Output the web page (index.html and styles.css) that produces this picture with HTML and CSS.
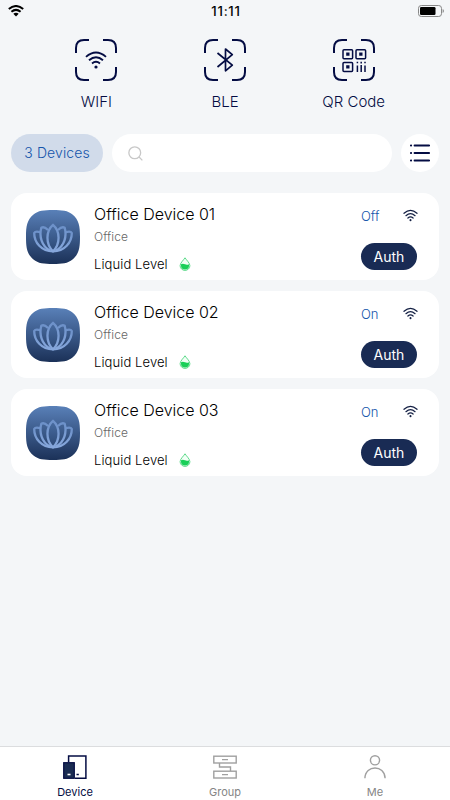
FILE: index.html
```html
<!DOCTYPE html>
<html lang="en">
<head>
    <meta charset="UTF-8">
    <meta name="viewport" content="width=device-width, initial-scale=1.0">
    <title>Devices</title>
    <link rel="stylesheet" href="styles.css">
</head>
<body>
    <!-- shared icons -->
    <svg class="sprite" width="0" height="0">
        <defs>
            <linearGradient id="tileFill" x1="0" y1="0" x2="0" y2="1">
                <stop offset="0" stop-color="#5980b8"/>
                <stop offset="1" stop-color="#1b3158"/>
            </linearGradient>
            <linearGradient id="petal" x1="0" y1="0" x2="0" y2="1">
                <stop offset="0" stop-color="#6d91c9"/>
                <stop offset="1" stop-color="#86a7dc"/>
            </linearGradient>
            <linearGradient id="petalFill" x1="0" y1="0" x2="0" y2="1">
                <stop offset="0" stop-color="#496da2"/>
                <stop offset="1" stop-color="#2c4875"/>
            </linearGradient>
        </defs>
        <symbol id="corners" viewBox="0 0 42 42">
            <path d="M1 14V9Q1 1 9 1H14M28 1H33Q41 1 41 9V14M41 28V33Q41 41 33 41H28M14 41H9Q1 41 1 33V28"/>
        </symbol>
        <symbol id="wifi" viewBox="0 0 16 14">
            <path d="M1 4.600Q8-1.600 15 4.600M3.100 7.200Q8 2.800 12.900 7.200M5.200 9.700Q8 7.200 10.800 9.700" fill="none" stroke="currentColor" stroke-width="1.300" stroke-linecap="round"/>
            <circle cx="8" cy="12" r="1.100" fill="currentColor"/>
        </symbol>
        <symbol id="lotus" viewBox="0 0 54 54">
            <path d="M27 0C36 0 42 .6 46.500 4.500C53 10 54 16 54 27S53 44 46.500 49.500C42 53.400 36 54 27 54S12 53.400 7.500 49.500C1 44 0 38 0 27S1 10 7.500 4.500C12 .6 18 0 27 0Z" fill="url(#tileFill)"/>
            <g fill="none" stroke="url(#petal)" stroke-width="2.300" stroke-linejoin="round">
                <path d="M14.500 22.200C11 21.200 8.800 21.700 8.200 22.900C8.200 32.500 15.500 41.300 27 41.300C38.500 41.300 45.800 32.500 45.800 22.900C45.200 21.700 43 21.200 39.500 22.200"/>
                <path d="M22 20C19.500 17.500 17 16.700 15.300 17.800C13 26 15.500 36 24 40.500"/>
                <path d="M32 20C34.500 17.500 37 16.700 38.700 17.800C41 26 38.500 36 30 40.500"/>
                <path d="M27 14.800C19.600 21 19.600 34.500 27 41.300C34.400 34.500 34.400 21 27 14.800Z" fill="url(#petalFill)"/>
            </g>
        </symbol>
        <symbol id="drop" viewBox="0 0 12 14">
            <path d="M6 .8C4.500 3.200 1.100 6 1.100 8.700A4.900 4.700 0 0 0 10.900 8.700C10.900 6 7.500 3.200 6 .8Z" fill="#f2fff6" stroke="#4bd57d" stroke-width=".9"/>
            <path d="M2 7.200Q4 6.300 6 7.300T10 7.200V8.700A4 3.800 0 0 1 2 8.700Z" fill="#19cf58"/>
        </symbol>
    </svg>

    <div class="app">
        <div class="status-bar">
            <svg class="status-wifi" viewBox="0 0 16 12">
                <path d="M.8 4Q8-2 15.200 4M3.400 6.800Q8 3 12.600 6.800" fill="none" stroke="#000" stroke-width="2"/>
                <path d="M5.300 8.800Q8 6.900 10.700 8.800L8 11.600Z"/>
            </svg>
            <span class="time">11:11</span>
            <svg class="battery" viewBox="0 0 26 12">
                <rect x=".5" y=".5" width="23" height="11" rx="2.800" fill="none" stroke="#888"/>
                <rect x="2" y="2" width="15.500" height="8" rx="1.300"/>
                <path d="M24.700 4V8Q25.800 7.300 25.800 6T24.700 4" fill="#777"/>
            </svg>
        </div>

        <div class="scan-options">
            <div class="scan-option">
                <div class="scan-icon">
                    <svg viewBox="0 0 42 42">
                        <use href="#corners"/>
                        <path d="M11 17.900Q21 9.300 31 17.900M14 21.300Q21 15.300 28 21.300M17 24.500Q21 21.200 25 24.500" stroke-width="1.900"/>
                        <circle cx="21" cy="28" r="1.600" class="solid"/>
                    </svg>
                </div>
                <span>WIFI</span>
            </div>
            <div class="scan-option">
                <div class="scan-icon">
                    <svg viewBox="0 0 42 42">
                        <use href="#corners"/>
                        <path d="M13.500 14L28.300 26.200L21.500 31.800V10L28.300 15.600L13.500 28" stroke-width="1.700"/>
                    </svg>
                </div>
                <span>BLE</span>
            </div>
            <div class="scan-option">
                <div class="scan-icon">
                    <svg viewBox="0 0 42 42">
                        <use href="#corners"/>
                        <g stroke-width="1.500">
                            <rect x="10" y="10.700" width="9.600" height="9" rx="1"/>
                            <rect x="23" y="10.700" width="9.600" height="9" rx="1"/>
                            <rect x="10" y="23.500" width="9.600" height="9" rx="1"/>
                            <path d="M24.400 22.800V24.300M24.400 26.500V33M28.200 22.800V24.500M28.200 26V33M32 22.800V24.300M32 26.500V33"/>
                        </g>
                        <path class="solid" d="M13.200 13.500h3.300v3.300h-3.300zM26.200 13.500h3.300v3.300h-3.300zM13.200 26.300h3.300v3.300h-3.300z"/>
                    </svg>
                </div>
                <span>QR Code</span>
            </div>
        </div>

        <div class="toolbar">
            <div class="device-count">3 Devices</div>
            <div class="search">
                <svg viewBox="0 0 16 16">
                    <circle cx="7.200" cy="7.200" r="6.300"/>
                    <path d="M11.800 11.800L15.300 15.300"/>
                </svg>
            </div>
            <button class="list-button" aria-label="List">
                <svg viewBox="0 0 20 18">
                    <path d="M4.500 1.500H19.200M4.500 9H19.200M4.500 16.500H19.200M.8 1.500H1.200M.8 9H1.200M.8 16.500H1.200"/>
                </svg>
            </button>
        </div>

        <div class="device-list">
            <div class="device-card">
                <svg class="device-icon"><use href="#lotus"/></svg>
                <div class="device-info">
                    <div class="device-name">Office Device 01</div>
                    <div class="device-group">Office</div>
                    <div class="device-level">Liquid Level <svg class="drop"><use href="#drop"/></svg></div>
                </div>
                <div class="device-side">
                    <div class="device-state"><span>Off</span><svg class="signal"><use href="#wifi"/></svg></div>
                    <button class="auth-button">Auth</button>
                </div>
            </div>
            <div class="device-card">
                <svg class="device-icon"><use href="#lotus"/></svg>
                <div class="device-info">
                    <div class="device-name">Office Device 02</div>
                    <div class="device-group">Office</div>
                    <div class="device-level">Liquid Level <svg class="drop"><use href="#drop"/></svg></div>
                </div>
                <div class="device-side">
                    <div class="device-state"><span>On</span><svg class="signal"><use href="#wifi"/></svg></div>
                    <button class="auth-button">Auth</button>
                </div>
            </div>
            <div class="device-card">
                <svg class="device-icon"><use href="#lotus"/></svg>
                <div class="device-info">
                    <div class="device-name">Office Device 03</div>
                    <div class="device-group">Office</div>
                    <div class="device-level">Liquid Level <svg class="drop"><use href="#drop"/></svg></div>
                </div>
                <div class="device-side">
                    <div class="device-state"><span>On</span><svg class="signal"><use href="#wifi"/></svg></div>
                    <button class="auth-button">Auth</button>
                </div>
            </div>
        </div>

        <div class="tab-bar">
            <div class="tab active">
                <svg viewBox="0 0 24 24">
                    <path d="M5.600 7V1H22.900V23.300H12" stroke-width="1.500"/>
                    <rect x=".7" y="7.700" width="10.600" height="15.600" fill="#1a2c52" stroke-width="1.200"/>
                    <path d="M4.500 19.500H7.500" stroke="#fff" stroke-width="1.600"/>
                    <path d="M13.500 19.500H15.800" stroke-width="1.500"/>
                </svg>
                <span>Device</span>
            </div>
            <div class="tab">
                <svg viewBox="0 0 24 24">
                    <rect x=".8" y="1.200" width="22.400" height="6.800"/>
                    <rect x=".8" y="16.200" width="22.400" height="6.800"/>
                    <path d="M6.500 8V12H17.500V16M9 4.600H15M9 19.600H15"/>
                </svg>
                <span>Group</span>
            </div>
            <div class="tab">
                <svg viewBox="0 0 24 24">
                    <circle cx="12" cy="5.300" r="4.600"/>
                    <path d="M1.900 23.300C2.300 9.500 21.700 9.500 22.100 23.300"/>
                </svg>
                <span>Me</span>
            </div>
        </div>
    </div>
</body>
</html>
```

FILE: styles.css
```css
:root {
  --page-bg: #f4f6f8;
  --navy: #040c43;
  --button-navy: #192b54;
  --blue: #1455ab;
  --grey: #858585;
}

* {
  box-sizing: border-box;
}

body {
  margin: 0;
  background: var(--page-bg);
  font-family: Inter, "Liberation Sans", sans-serif;
  color: #000;
}

.sprite {
  position: absolute;
}

button {
  border: none;
  padding: 0;
  font-family: inherit;
}

.app {
  height: 100vh;
  display: flex;
  flex-direction: column;
  overflow: hidden;
}

.status-bar {
  height: 22px;
  padding: 0 6px 0 8px;
  display: grid;
  grid-template-columns: 1fr auto 1fr;
  align-items: center;
}

.status-wifi {
  width: 16px;
  height: 12px;
}

.time {
  font-size: 13px;
  font-weight: 500;
  line-height: 22px;
  letter-spacing: 0.8px;
}

.battery {
  width: 26px;
  height: 12px;
  justify-self: end;
}

.scan-options {
  display: flex;
  padding: 17px 32px 0;
  height: 112px;
}

.scan-option {
  flex: 1;
  display: flex;
  flex-direction: column;
  align-items: center;
  gap: 11px;
  color: var(--navy);
  font-size: 15px;
  font-weight: 300;
  line-height: 20px;
}

.scan-icon {
  height: 42px;
}

.scan-icon svg {
  width: 42px;
  height: 42px;
  fill: none;
  stroke: var(--navy);
  stroke-width: 2;
  stroke-linejoin: round;
}

.scan-icon .solid {
  fill: var(--navy);
  stroke: none;
}

.toolbar {
  display: flex;
  gap: 9px;
  padding: 0 11px;
}

.device-count {
  width: 92px;
  height: 38px;
  border-radius: 19px;
  background: #d1dbea;
  color: var(--blue);
  font-size: 14px;
  font-weight: 300;
  letter-spacing: 0.1px;
  line-height: 38px;
  text-align: center;
}

.search {
  flex: 1;
  height: 38px;
  border-radius: 19px;
  background: #fff;
  display: flex;
  align-items: center;
  padding-left: 16px;
}

.search svg {
  width: 15px;
  height: 15px;
  fill: none;
  stroke: #c8c8c8;
  stroke-width: 1.4;
}

.list-button {
  width: 38px;
  height: 38px;
  border-radius: 50%;
  background: #fff;
  display: flex;
  align-items: center;
  justify-content: center;
}

.list-button svg {
  width: 20px;
  height: 18px;
  stroke: var(--navy);
  stroke-width: 1.8;
  stroke-linecap: round;
}

.device-list {
  flex: 1;
  display: flex;
  flex-direction: column;
  gap: 11px;
  padding: 21px 11px 0;
}

.device-card {
  height: 87px;
  padding: 0 21px 0 15px;
  border-radius: 16px;
  background: #fff;
  display: flex;
}

.device-icon {
  width: 54px;
  height: 54px;
  margin-top: 17px;
}

.device-info {
  flex: 1;
  padding: 11px 0 0 14px;
}

.device-name {
  font-size: 16px;
  font-weight: 300;
  line-height: 20px;
}

.device-group {
  margin-top: 4px;
  font-size: 12px;
  font-weight: 300;
  letter-spacing: 0.1px;
  line-height: 18px;
  color: #666;
}

.device-level {
  display: flex;
  align-items: center;
  gap: 11px;
  margin-top: 8px;
  font-size: 13px;
  font-weight: 300;
  letter-spacing: 0.1px;
  line-height: 20px;
}

.drop {
  width: 12px;
  height: 14px;
}

.device-side {
  width: 57px;
  padding-top: 13px;
}

.device-state {
  display: flex;
  align-items: center;
  justify-content: space-between;
  font-size: 13px;
  font-weight: 300;
  line-height: 20px;
  color: var(--blue);
}

.signal {
  width: 15px;
  height: 13px;
  margin-bottom: 2px;
  color: #142044;
}

.auth-button {
  display: block;
  width: 56px;
  height: 27px;
  margin-top: 17px;
  border-radius: 14px;
  background: var(--button-navy);
  color: #fff;
  font-size: 14px;
  line-height: 27px;
}

.tab-bar {
  height: 54px;
  border-top: 1px solid #dcdddf;
  background: #fff;
  display: flex;
}

.tab {
  flex: 1;
  display: flex;
  flex-direction: column;
  align-items: center;
  gap: 6px;
  padding-top: 8px;
  color: var(--grey);
  font-size: 11px;
  line-height: 14px;
}

.tab svg {
  width: 24px;
  height: 24px;
  fill: none;
  stroke: #a0a0a0;
  stroke-width: 1.4;
}

.tab.active {
  color: var(--navy);
}

.tab.active svg {
  stroke: var(--navy);
}
```
